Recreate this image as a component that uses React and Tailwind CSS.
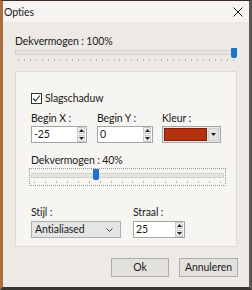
import React from "react";

const font = { fontFamily: 'Lato, "Noto Sans", Arial, sans-serif' };

function Ticks({ count }) {
  return (
    <div className="flex justify-between px-[3px] h-[3px]">
      {[...Array(count)].map((_, i) => (
        <div key={i} className="w-px h-[2px] bg-[#bdb9b3]"></div>
      ))}
    </div>
  );
}

function Spinner() {
  return (
    <div className="flex flex-col gap-px w-[8px] h-[15px]">
      <div className="flex-1 border border-[#c9c9c9] bg-[#ececec] flex items-center justify-center">
        <svg width="5" height="3" viewBox="0 0 5 3"><path d="M0 3 L2.5 0 L5 3 Z" fill="#202020" /></svg>
      </div>
      <div className="flex-1 border border-[#c9c9c9] bg-[#ececec] flex items-center justify-center">
        <svg width="5" height="3" viewBox="0 0 5 3"><path d="M0 0 L2.5 3 L5 0 Z" fill="#202020" /></svg>
      </div>
    </div>
  );
}

function NumberInput({ value, width }) {
  return (
    <div className={`${width} h-[17px] border border-[#a5a5a5] bg-white flex items-center justify-between pl-[2px] pr-px`}>
      <span className="text-[10.5px] leading-[15px] text-[#1a1a1a]">{value}</span>
      <Spinner />
    </div>
  );
}

export default function App() {
  return (
    <div
      className="w-[252px] h-[290px] flex flex-col bg-[#edeae5] border-t border-t-[#3b2b22] border-l-[3px] border-l-[#a8703f] border-r-[3px] border-r-[#5b5753] border-b-[3px] border-b-[#3a3631] text-[#1a1a1a] text-[10.5px] tracking-[-0.1px]"
      style={font}
    >
      {/* title bar */}
      <div className="h-[21px] flex items-center justify-between pl-px pr-[6px] bg-[#f6f4f1]">
        <span className="leading-[16px]">Opties</span>
        <svg width="10" height="10" viewBox="0 0 10 10">
          <path d="M0.5 0.5 L9.5 9.5 M9.5 0.5 L0.5 9.5" stroke="#222" strokeWidth="1" />
        </svg>
      </div>

      <div className="flex flex-col pl-[12px] pr-[12px]">
        <div className="mt-[11px] h-[16px] leading-[16px]">Dekvermogen : 100%</div>

        {/* slider 1 */}
        <div className="relative mt-px h-[13px]">
          <div className="h-[5px] border border-[#d4d2ce] bg-[#e6e4e1]"></div>
          <div className="mt-[4px]">
            <Ticks count={37} />
          </div>
          <div className="absolute right-0 top-[-2px] w-[6px] h-[10px] bg-[#1f73c8] rounded-b-[2px]"></div>
        </div>

        {/* group */}
        <div className="mt-[8px] h-[176px] border border-[#dedbd6] bg-[#f7f5f2] flex flex-col pl-[15px]">
          <div className="mt-[18px] h-[16px] flex items-center gap-[3px]">
            <div className="w-[11px] h-[11px] border border-[#333] bg-white flex items-center justify-center">
              <svg width="9" height="9" viewBox="0 0 9 9">
                <path d="M1 4.5 L3.5 7 L8 1.5" stroke="#222" strokeWidth="1.1" fill="none" />
              </svg>
            </div>
            <span className="leading-[16px]">Slagschaduw</span>
          </div>

          <div className="mt-[5px] flex">
            <div className="flex flex-col w-[56px]">
              <span className="h-[15px] leading-[15px]">Begin X :</span>
              <NumberInput value="-25" width="w-[56px]" />
            </div>
            <div className="flex flex-col w-[56px] ml-[10px]">
              <span className="h-[15px] leading-[15px]">Begin Y :</span>
              <NumberInput value="0" width="w-[56px]" />
            </div>
            <div className="flex flex-col w-[59px] ml-[9px]">
              <span className="h-[15px] leading-[15px]">Kleur :</span>
              <div className="h-[17px] border border-[#a5a5a5] bg-[#e9e9e9] flex items-center p-px gap-px">
                <div className="flex-1 h-[13px] bg-[#b5300e] border border-[#7a2008]"></div>
                <div className="w-[11px] h-[13px] bg-[#e4e4e4] border border-[#cfcfcf] flex items-center justify-center">
                  <svg width="5" height="3" viewBox="0 0 5 3"><path d="M0 0 L2.5 3 L5 0 Z" fill="#202020" /></svg>
                </div>
              </div>
            </div>
          </div>

          <div className="mt-[10px] h-[15px] leading-[15px]">Dekvermogen : 40%</div>

          {/* slider 2 */}
          <div className="relative ml-[-2px] w-[197px] h-[18px] border border-dotted border-[#9a9a9a] px-px pt-[4px]">
            <div className="h-[5px] border border-[#d4d2ce] bg-[#e6e4e1]"></div>
            <div className="mt-[3px]">
              <Ticks count={18} />
            </div>
            <div className="absolute left-[63px] top-0 w-[6px] h-[11px] bg-[#1f73c8] rounded-b-[2px]"></div>
          </div>

          <div className="mt-[18px] flex">
            <div className="flex flex-col w-[90px]">
              <span className="h-[16px] leading-[16px]">Stijl :</span>
              <div className="mt-px h-[17px] border border-[#adadad] bg-[#e5e5e5] flex items-center justify-between pl-[3px] pr-[7px]">
                <span className="leading-[15px]">Antialiased</span>
                <svg width="7" height="4" viewBox="0 0 7 4">
                  <path d="M0.5 0.5 L3.5 3.5 L6.5 0.5" stroke="#444" strokeWidth="1" fill="none" />
                </svg>
              </div>
            </div>
            <div className="flex flex-col w-[52px] ml-[12px]">
              <span className="h-[16px] leading-[16px]">Straal :</span>
              <div className="mt-px">
                <NumberInput value="25" width="w-[52px]" />
              </div>
            </div>
          </div>
        </div>

        {/* buttons */}
        <div className="mt-[11px] flex justify-end gap-[10px]">
          <button className="w-[58px] h-[19px] border border-[#adadad] bg-[#e3e1de] leading-[15px]">Ok</button>
          <button className="w-[59px] h-[19px] border border-[#adadad] bg-[#e3e1de] leading-[15px] mr-[-1px]">Annuleren</button>
        </div>
      </div>
    </div>
  );
}
